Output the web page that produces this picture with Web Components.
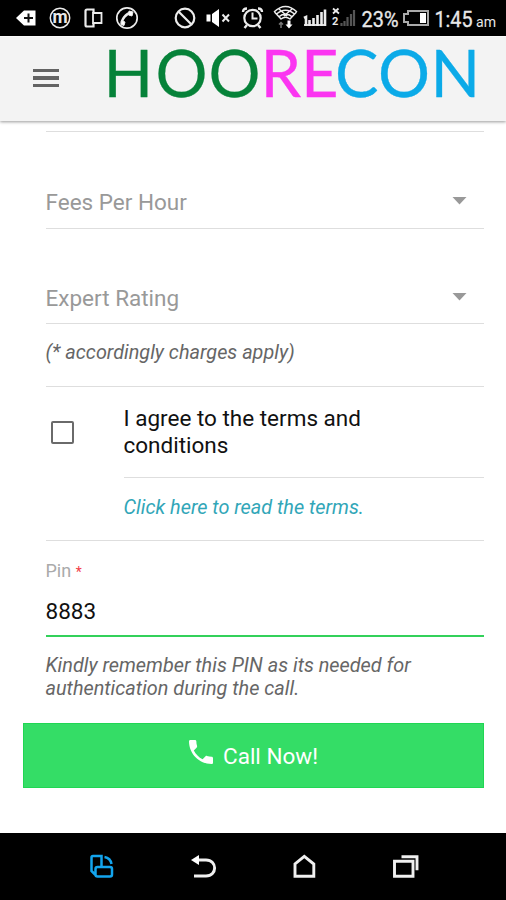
<!DOCTYPE html>
<html lang="en"><head><meta charset="utf-8"><title>Hoorecon</title>
<style>
body{margin:0;width:506px;height:900px;overflow:hidden;background:#fff;font-family:Roboto,"Liberation Sans",sans-serif}
</style></head><body>
<app-screen></app-screen>
<script>
const define=(name,html)=>customElements.define(name,class extends HTMLElement{
  constructor(){super();const t=document.createElement('template');t.innerHTML=html;this.attachShadow({mode:'open'}).append(t.content.cloneNode(true));}
});

define('status-bar',`<style>
:host{display:block;height:36px;background:#000;color:#fff}
svg{display:block}
text{font-family:Roboto,sans-serif;fill:#e8e8e8}
</style>
<svg width="506" height="36" viewBox="0 0 506 36" fill="none" stroke="#ececec" stroke-width="1.8">
<path d="M16 18l8-7.500h11.500v15H24z" fill="#fff" stroke="none"/><path d="M28.500 13.500v9M24 18h9" stroke="#111" stroke-width="2"/>
<circle cx="60" cy="18" r="9.700" stroke-width="1.500"/><text x="60" y="23.200" font-size="17.500" font-weight="700" text-anchor="middle" stroke="none" fill="#fff">m</text>
<path d="M92.500 9.500h-5.500q-1.500 0-1.500 1.500v14q0 1.500 1.500 1.500h6.500v-3.500M93.500 13v-3.500h-2" stroke-width="2.200"/><path d="M93 13h8.500v10h-8.500z"/>
<circle cx="127" cy="18" r="10.200" stroke-width="1.700"/><path d="M122 24c-1-4 4-11 9.500-11.500" stroke-width="2.600"/><path d="M121.500 20.500l3.500 1.500-1 3.500-3-1zM129 11l4 1-1 4-3.500-1z" fill="#fff" stroke-width="1"/>
<circle cx="185" cy="18" r="9.300" stroke-width="2.200"/><path d="M178.500 11.500l13 13" stroke-width="2.200"/>
<path d="M206.500 14.500h4v7h-4zM212 14l7-5v18l-7-5z" fill="#fff" stroke="none"/><path d="M222.500 14.500l6.500 7M229 14.500l-6.500 7" stroke-width="2"/>
<circle cx="252.500" cy="18" r="8.200" stroke-width="2.200"/><path d="M252.500 12.500V18.500h5" stroke-width="2"/><path d="M243 12q0-3.500 4-3.500M262 12q0-3.500-4-3.500M247 25l-2.500 3M258 25l2.500 3" stroke-width="2.400"/>
<g stroke-width="1.500"><path d="M274 12q11.500-11 23 0M276 14.500q9.500-8.500 19 0M278.500 17q7-6 14 0M281 19q4.500-3.500 9 0M274.500 12l7 7.500M296.500 12l-7 7.500M279 9l8 7M292 9l-8 7"/><path d="M281 28v-5m-2 1.500l2-2 2 2" stroke="#777"/></g><path d="M287.500 20.500h3v4h2l-3.500 4-3.500-4h2z" fill="#fff" stroke="none"/>
<path d="M304 18l2-1v9M309.500 26v-6M313.500 26v-8M317.500 26V15M321.500 26V12M325 26V9.500" stroke-width="2.600"/><path d="M304 25h22"/>
<path d="M333 8.500l6 5M338.500 8.500l-5.500 5" stroke-width="1.800"/><text x="332" y="25" font-size="11" font-weight="700" stroke="none">2</text>
<path d="M341.500 26v-3M344.500 26v-5M347.500 26v-9M351 26V14M354 26V10" stroke="#555" stroke-width="2.200"/>
<text x="361.500" y="26.500" font-size="21.500" textLength="37" lengthAdjust="spacingAndGlyphs" stroke="#e8e8e8" stroke-width=".3">23%</text>
<path d="M408 11h20v14h-20v-3h-4v-8h4z" stroke="#aaa" stroke-width="2"/><path d="M420 13h6v10h-6z" fill="#fff" stroke="none"/>
<text x="434.500" y="26.500" font-size="22" textLength="38" lengthAdjust="spacingAndGlyphs" stroke="#e8e8e8" stroke-width=".3">1:45</text>
<text x="476" y="26.500" font-size="14.500" textLength="20" lengthAdjust="spacingAndGlyphs" stroke="none">am</text>
</svg>`);

define('brand-header',`<style>
:host{display:flex;height:85px;background:#f3f3f3;box-shadow:0 1px 3px #0006;position:relative;border-top:1px solid #fafafa;box-sizing:border-box}
.menu{width:26px;margin:32px 0 0 32.500px;height:18px;display:flex;flex-direction:column;justify-content:space-between}
i{height:3.200px;background:#636363}
svg{margin-left:41.500px;overflow:visible}
text{font-family:Lato,sans-serif;font-size:65px;stroke-width:.3}
</style><div class="menu"><i></i><i></i><i></i></div>
<svg width="390" height="84" viewBox="100 37 390 84"><text y="96.500"><tspan x="103.500 155.500 208.500" fill="#068239" stroke="#068239">HOO</tspan><tspan x="260.500 301" fill="#fb35f1" stroke="#fb35f1">RE</tspan><tspan x="335 378 430.500" fill="#0baae8" stroke="#0baae8">CON</tspan></text></svg>`);

define('select-row',`<style>
:host{display:flex;align-items:center;justify-content:space-between;box-sizing:border-box;border-bottom:1.500px solid #dedede;color:#999;font-size:22.500px;line-height:27px;padding:0 17px 0 0}
svg{width:15px;height:8px;margin-top:-2px}
</style><slot></slot><svg viewBox="0 0 15 8"><path d="M.5 0h14L7.500 7.500z" fill="#999"/></svg>`);

define('form-note',`<style>:host{display:block;font-size:19.850px;line-height:23px;font-style:italic;color:#666}</style><slot></slot>`);

define('terms-check',`<style>
:host{display:grid;grid-template-columns:78px 1fr;height:155px;box-sizing:border-box;border-bottom:1.500px solid #dedede}
.box{width:23px;height:23px;box-sizing:border-box;border:2.500px solid #6a6a6a;border-radius:2px;margin:34px 0 0 5px}
.label{height:91px;box-sizing:border-box;padding-top:18px;border-bottom:1.500px solid #dedede;font-size:22.500px;line-height:27px;color:#111}
.label ::slotted(*){display:block;width:270px}
.link{padding-top:18px}
</style><div class="box"></div><div><div class="label"><slot></slot></div><div class="link"><slot name="link"></slot></div></div>`);

define('pin-field',`<style>
:host{display:block;height:96px;box-sizing:border-box;padding-top:19px;border-bottom:2.500px solid #32d15a}
label{display:block;font-size:18px;line-height:22px;color:#aaa}
b{color:#f23b48;font-weight:400;font-size:14px}
div{margin-top:15px;font-size:22.500px;line-height:27px;color:#111}
</style><label>Pin <b>*</b></label><div><slot></slot></div>`);

define('call-button',`<style>
:host{display:flex;justify-content:center;height:65px;box-sizing:border-box;background:#34dd66;border:1px solid #20d653;color:#fff;font-size:22.500px;line-height:64px}
svg{width:24px;height:24px;margin:16.500px 10px 0 0}
</style><svg viewBox="3 3 18 18" fill="#fff"><path d="M6.620 10.790c1.440 2.830 3.760 5.140 6.590 6.590l2.200-2.200c.27-.27.67-.36 1.020-.24 1.120.37 2.330.57 3.570.57.55 0 1 .45 1 1V20c0 .55-.45 1-1 1-9.390 0-17-7.610-17-17 0-.55.45-1 1-1h3.500c.55 0 1 .45 1 1 0 1.250.2 2.450.57 3.570.11.35.03.74-.25 1.020z"/></svg><slot></slot>`);

define('nav-bar',`<style>:host{display:block;height:67px;background:#000}svg{display:block}</style>
<svg width="506" height="67" viewBox="0 833 506 67" fill="none" stroke="#f0f0f0" stroke-width="2.900">
<g stroke="#13a4ed" stroke-width="2.500"><path d="M96 875.500l-4.500-4.500v-13.500q0-1.500 1.500-1.500h8.500v10.500M95.500 869v5.500q0 2 2 2h12.500q2 0 2-2v-5.500q0-2-2-2h-12.500q-2 0-2 2zM104.500 857q6 1 7 7"/></g>
<path d="M198 860h8c11.500 0 11.500 16 0 16h-12"/><path d="M191 860l8-5v10z" fill="#fff" stroke="none"/>
<path d="M295 876.300v-12.300l9.300-7.700 9.500 7.700v12.300z"/>
<path d="M394.500 861.300h18.500v15h-18.500zM401.500 856.800h15.500v13.500"/>
</svg>`);

define('app-screen',`<style>
:host{display:flex;flex-direction:column;height:900px}
main{flex:1;background:#fff;padding:0 22px 0 45.500px}
.rule{height:10px;border-bottom:1.500px solid #dedede}
.fees{height:96.500px;padding-top:45px}
.rating{height:95px;padding-top:45px}
.charge{padding:17px 0 22px}
.top{border-top:1.500px solid #dedede}
.remember{padding:17px 0 23px}
form-note.link{color:#31a6b8}
call-button{margin-left:-22.500px}
</style>
<status-bar></status-bar><brand-header></brand-header>
<main><div class="rule"></div>
<select-row class="fees">Fees Per Hour</select-row>
<select-row class="rating">Expert Rating</select-row>
<form-note class="charge">(* accordingly charges apply)</form-note>
<terms-check class="top"><span>I agree to the terms and conditions</span><form-note slot="link" class="link">Click here to read the terms.</form-note></terms-check>
<pin-field>8883</pin-field>
<form-note class="remember">Kindly remember this PIN as its needed for<br>authentication during the call.</form-note>
<call-button>Call Now!</call-button></main>
<nav-bar></nav-bar>`);
</script></body></html>
